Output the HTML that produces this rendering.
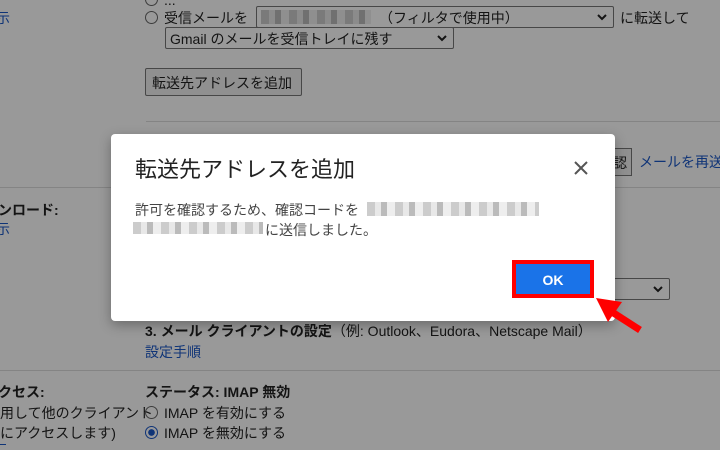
<!DOCTYPE html>
<html><head><meta charset="utf-8"><style>
body{margin:0;width:720px;height:450px;overflow:hidden;background:#fff;font-family:"Liberation Sans","Noto Sans CJK JP",sans-serif;position:relative;color:#222;font-size:14px}
.a{position:absolute;white-space:nowrap}
.lnk{color:#1a57c7}
.ov{position:absolute;left:0;top:0;width:720px;height:450px;background:rgba(0,0,0,0.4)}
.radio{display:inline-block;width:11px;height:11px;border:1px solid #666;border-radius:50%;vertical-align:-1px;margin-right:6px}
.sel{position:absolute;border:1px solid #777;border-radius:2px;background:#fff;height:20px}
.chev{position:absolute;right:6px;top:6px}
.blur{background:repeating-linear-gradient(90deg,#ccc 0 8px,#e8e8e8 8px 14px,#bbb 14px 20px,#eee 20px 28px)}
</style></head><body>
<div class="a" style="left:-4px;top:8px;color:#1a57c7">示</div>
<div class="a" style="left:145px;top:-8px"><span class="radio"></span>...</div>
<div class="a" style="left:145px;top:8px"><span class="radio"></span>受信メールを</div>
<div class="sel" style="left:256px;top:6px;width:356px"><div class="blur" style="position:absolute;left:4px;top:3px;width:110px;height:14px"></div><span class="a" style="left:122px;top:1px">（フィルタで使用中）</span><svg class="chev" width="10" height="8" viewBox="0 0 10 8"><path d="M1 2L5 6L9 2" stroke="#222" stroke-width="2" fill="none"/></svg></div>
<div class="a" style="left:620px;top:8px">に転送して</div>
<div class="sel" style="left:165px;top:27px;width:287px"><span class="a" style="left:4px;top:1px">Gmail のメールを受信トレイに残す</span><svg class="chev" width="10" height="8" viewBox="0 0 10 8"><path d="M1 2L5 6L9 2" stroke="#222" stroke-width="2" fill="none"/></svg></div>
<div class="a" style="left:145px;top:68px;width:155px;height:26px;border:1px solid #777;border-radius:2px;background:#f1f1f1"><span style="position:absolute;left:6px;top:4px">転送先アドレスを追加</span></div>
<div class="a" style="left:146px;top:121px;width:574px;height:1px;background:#ddd"></div>
<div class="a" style="left:0;top:187px;width:720px;height:1px;background:#ddd"></div>
<div class="a" style="left:600px;top:148px;width:30px;height:26px;border:1px solid #777;background:#f1f1f1"><span style="position:absolute;left:12px;top:4px">認</span></div>
<div class="a lnk" style="left:639px;top:152px">メールを再送</div>
<div class="a" style="left:-2px;top:200px;font-weight:bold">ンロード:</div>
<div class="a" style="left:-4px;top:219px;color:#1a57c7">示</div>
<div class="sel" style="left:610px;top:278px;width:58px"><svg class="chev" width="10" height="8" viewBox="0 0 10 8"><path d="M1 2L5 6L9 2" stroke="#222" stroke-width="2" fill="none"/></svg></div>
<div class="a" style="left:145px;top:321px"><b>3. メール クライアントの設定</b>（例: Outlook、Eudora、Netscape Mail）</div>
<div class="a lnk" style="left:145px;top:342px">設定手順</div>
<div class="a" style="left:0;top:370px;width:720px;height:1px;background:#ddd"></div>
<div class="a" style="left:-2px;top:382px;font-weight:bold">クセス:</div>
<div class="a" style="left:145px;top:382px;font-weight:bold">ステータス: IMAP 無効</div>
<div class="a" style="left:0;top:403px">用して他のクライアント</div>
<div class="a" style="left:145px;top:403px"><span class="radio"></span>IMAP を有効にする</div>
<div class="a" style="left:0;top:423px">にアクセスします)</div>
<div class="a" style="left:145px;top:423px"><span class="radio" style="border-color:#1a57c7;background:radial-gradient(#1a57c7 40%,#fff 45%)"></span>IMAP を無効にする</div>
<div class="a" style="left:0;top:444px;width:6px;height:1px;background:#1a57c7"></div>
<div class="ov"></div>
<div class="a" style="left:111px;top:134px;width:504px;height:187px;background:#fff;border-radius:4px;box-shadow:0 4px 12px rgba(0,0,0,.3)">
<div class="a" style="left:24px;top:18px;font-size:22px;color:#222">転送先アドレスを追加</div>
<svg class="a" style="left:462px;top:26px" width="16" height="16" viewBox="0 0 16 16"><path d="M2 2L14 14M14 2L2 14" stroke="#555" stroke-width="2"/></svg>
<div class="a" style="left:24px;top:66px;color:#444">許可を確認するため、確認コードを</div>
<div class="a blur" style="left:256px;top:68px;width:172px;height:14px"></div>
<div class="a blur" style="left:22px;top:88px;width:130px;height:12px"></div>
<div class="a" style="left:154px;top:86px;color:#444">に送信しました。</div>
<div class="a" style="left:401px;top:126px;width:82px;height:38px;border:4px solid #f00;box-sizing:border-box;background:#1a73e8"><span style="position:absolute;left:0;right:0;top:8px;text-align:center;color:#fff;font-weight:bold;font-size:14px">OK</span></div>
</div>
<svg class="a" style="left:592px;top:292px" width="60" height="45" viewBox="0 0 60 45"><path d="M48 38L20 20" stroke="#f00" stroke-width="7"/><path d="M4 6L30 10L16 30Z" fill="#f00"/></svg>
</body></html>
